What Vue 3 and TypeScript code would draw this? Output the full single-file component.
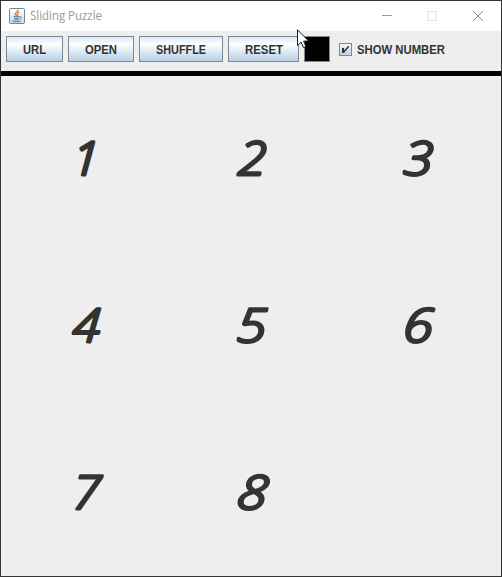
<script setup lang="ts">
import { ref } from 'vue'

interface Tile {
  value: number
  dx: number
  stretch: number
  skew: number
}

const actions: { label: string; width: number; text: number }[] = [
  { label: 'URL', width: 57, text: 23 },
  { label: 'OPEN', width: 66, text: 32 },
  { label: 'SHUFFLE', width: 84, text: 50 },
  { label: 'RESET', width: 71, text: 38 },
]

const tiles: Tile[] = [
  { value: 1, dx: 1, stretch: 1.02, skew: -3 },
  { value: 2, dx: 0.5, stretch: 1.1, skew: -3 },
  { value: 3, dx: -0.5, stretch: 1.14, skew: -3 },
  { value: 4, dx: 1.5, stretch: 1.06, skew: -4 },
  { value: 5, dx: 0, stretch: 1.16, skew: -3 },
  { value: 6, dx: -0.5, stretch: 1.16, skew: -3 },
  { value: 7, dx: 1.5, stretch: 1.08, skew: -4 },
  { value: 8, dx: -0.5, stretch: 1.16, skew: -8 },
]

const place = (tile: Tile): string =>
  `translate(${50 + tile.dx} 56) skewX(${tile.skew}) scale(${tile.stretch} 1)`

const showNumber = ref(true)
</script>

<template>
  <div class="window">
    <header class="titlebar">
      <svg class="java" width="16" height="16" viewBox="0 0 16 16">
        <defs>
          <linearGradient id="javaBg" x1="0" y1="0" x2="0" y2="1">
            <stop offset="0" stop-color="#fff" />
            <stop offset="1" stop-color="#cbd9e4" />
          </linearGradient>
        </defs>
        <rect x=".5" y=".5" width="15" height="15" rx="1.2" fill="url(#javaBg)" stroke="#6e8798" />
        <path d="M9 1.6C9.8 3.5 5.7 4.3 6.2 6c.2.8 1.4 1.4 1.2 2.2M10.5 4C8.700 4.800 7.700 5.500 8.400 6.500c.5.7.3 1.200-.3 1.700" fill="none" stroke="#e77b37" stroke-width="1.300" />
        <path d="M4.500 8.700h6M5 10.200h5M5.500 11.700h4M10.500 8.700c2.500-.5 2.500 1.800.2 2.300M3.200 12.600c1 1.300 7.500 1.200 8.800.1" fill="none" stroke="#527b9b" stroke-width="1" />
      </svg>
      <svg class="title" width="80" height="24">
        <text x="3" y="16" textLength="72" lengthAdjust="spacingAndGlyphs">Sliding Puzzle</text>
      </svg>
      <svg class="controls" width="102" height="12" viewBox="0 0 102 12" shape-rendering="crispEdges">
        <path d="M0 5.500h10" stroke="#999" />
        <rect x="45.500" y="1.500" width="9" height="9" fill="none" stroke="#e6e6e6" />
        <path d="M91 1l10 10M101 1l-10 10" stroke="#8c8c8c" shape-rendering="auto" />
      </svg>
    </header>

    <div class="toolbar">
      <button v-for="action in actions" :key="action.label" class="action" :style="{ width: action.width + 'px' }">
        <svg :width="action.text + 6" height="22">
          <text x="3" y="16" :textLength="action.text" lengthAdjust="spacingAndGlyphs">{{ action.label }}</text>
        </svg>
      </button>
      <button class="swatch" aria-label="Colour"></button>
      <div class="check" @click="showNumber = !showNumber">
        <svg class="box" width="13" height="13" viewBox="0 0 13 13">
          <defs>
            <linearGradient id="boxBg" x1="0" y1="0" x2="0" y2="1">
              <stop offset="0" stop-color="#f4f8fb" />
              <stop offset="1" stop-color="#bdd2e6" />
            </linearGradient>
          </defs>
          <rect x=".5" y=".5" width="12" height="12" fill="url(#boxBg)" stroke="#7a8a99" />
          <path v-if="showNumber" d="M3 5h2v2.400L9 3h1v1L5 10H3z" fill="#333" />
        </svg>
        <svg width="94" height="22">
          <text x="3" y="16" textLength="88" lengthAdjust="spacingAndGlyphs">SHOW NUMBER</text>
        </svg>
      </div>
    </div>

    <main class="board">
      <div v-for="tile in tiles" :key="tile.value" class="tile">
        <svg v-if="showNumber" width="100" height="80" viewBox="0 0 100 80">
          <text class="digit" :transform="place(tile)" text-anchor="middle">{{ tile.value }}</text>
        </svg>
      </div>
      <div class="tile"></div>
    </main>

    <svg class="cursor" width="13" height="20" viewBox="0 0 13 20">
      <path d="M.5 .8v15.700l3.600-3.500 2.400 5.600 2.500-1-2.400-5.500h5z" fill="#fff" stroke="#000" stroke-width=".9" />
    </svg>
  </div>
</template>

<style>
body {
  margin: 0;
  overflow: hidden;
}
</style>

<style scoped>
.window {
  position: relative;
  box-sizing: border-box;
  width: 502px;
  height: 577px;
  border: 1px solid #373435;
  background: #eee;
  display: flex;
  flex-direction: column;
  font-family: "Liberation Sans", Arial, sans-serif;
}
svg {
  flex: none;
  overflow: visible;
}
.titlebar {
  display: flex;
  align-items: center;
  height: 30px;
  padding-left: 8px;
  background: #fff;
  flex: none;
}
.title {
  margin-left: 2px;
  font: 12px "Open Sans", sans-serif;
  fill: #999;
}
.controls {
  margin-left: auto;
  margin-right: 17px;
}
.toolbar {
  box-sizing: border-box;
  display: flex;
  gap: 5px;
  height: 45px;
  padding: 5px 0 0 5px;
  border-bottom: 5px solid #000;
  flex: none;
  font-size: 12px;
  font-weight: bold;
  fill: #333;
}
.action {
  box-sizing: border-box;
  display: flex;
  align-items: center;
  justify-content: center;
  height: 26px;
  padding: 0;
  border: 1px solid #7a8a99;
  background: linear-gradient(#dde8f3 0%, #fff 30%, #e6eef6 55%, #b8cfe5 100%);
  font: inherit;
}
.swatch {
  width: 26px;
  height: 26px;
  padding: 0;
  border: 1px solid #7a8a99;
  background: #000;
}
.check {
  display: flex;
  align-items: center;
  gap: 2px;
  height: 26px;
  margin-left: 4px;
}
.box {
  margin-top: 1px;
}
.board {
  flex: 1;
  display: grid;
  grid-template-columns: repeat(3, 1fr);
  grid-template-rows: repeat(3, 1fr);
}
.tile {
  display: flex;
  align-items: center;
  justify-content: center;
}
.digit {
  font: italic 300 46.5px "Open Sans", sans-serif;
  fill: #333;
  stroke: #333;
  stroke-width: 3.2px;
  stroke-linejoin: round;
  vector-effect: non-scaling-stroke;
}
.cursor {
  position: absolute;
  left: 296px;
  top: 28px;
}
</style>
